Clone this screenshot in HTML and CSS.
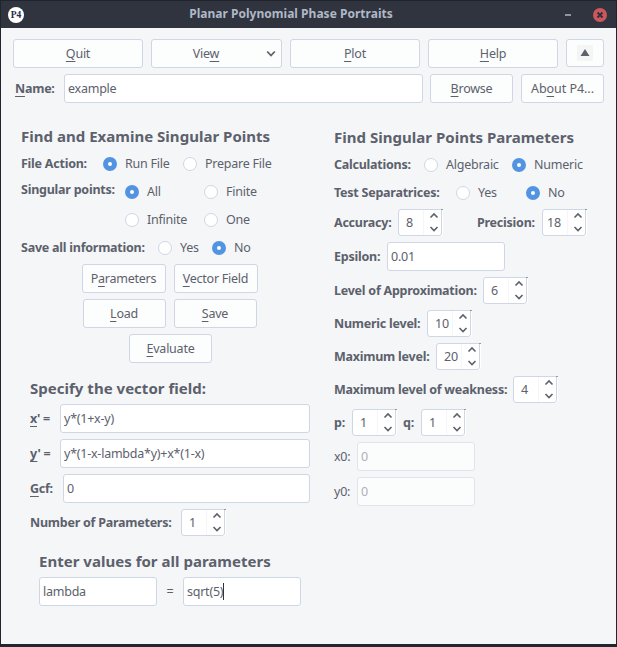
FILE: index.html
```html
<!DOCTYPE html>
<html lang="en">
<head>
<meta charset="utf-8">
<title>Planar Polynomial Phase Portraits</title>
<link rel="stylesheet" href="styles.css">
</head>
<body>
<svg class="defs" width="0" height="0" aria-hidden="true">
  <symbol id="arrows" viewBox="0 0 12 22"><path d="M2.500 6.500 6 3l3.500 3.500M2.500 16l3.500 3.500 3.500-3.500" fill="none" stroke="currentColor" stroke-width="1.600"/></symbol>
</svg>
<div class="window">
  <header class="titlebar">
    <span class="logo">P4</span>
    <h1>Planar Polynomial Phase Portraits</h1>
    <span class="minimize"></span>
    <svg class="close" viewBox="0 0 14 14"><circle cx="7" cy="7" r="7" fill="#cc575d"/><path d="M4.500 4.500l5 5m0-5l-5 5" stroke="#2f343f" stroke-width="2"/></svg>
  </header>

  <div class="toolbar">
    <button class="btn"><span><u>Q</u>uit</span></button>
    <button class="btn view"><span>Vie<u>w</u></span><svg width="10" height="8" viewBox="0 0 10 8"><path d="M1.200 1.500 5 5.500l3.800-4" fill="none" stroke="currentColor" stroke-width="1.800"/></svg></button>
    <button class="btn"><span><u>P</u>lot</span></button>
    <button class="btn"><span><u>H</u>elp</span></button>
    <button class="btn up"><i><svg width="16" height="16" viewBox="0 0 16 16"><path d="M8 4l4.500 7h-9z" fill="currentColor"/></svg></i></button>
  </div>
  <div class="namebar">
    <b class="name-label"><u>N</u>ame:</b>
    <div class="field">example</div>
    <button class="btn small browse"><span><u>B</u>rowse</span></button>
    <button class="btn small about"><span>Ab<u>o</u>ut P4...</span></button>
  </div>

  <main class="columns">
    <section class="left">
      <h2>Find and Examine Singular Points</h2>
      <div class="row options"><b class="l-file">File Action:</b><span class="radio on o-run">Run File</span><span class="radio">Prepare File</span></div>
      <div class="points">
        <b>Singular points:</b>
        <div class="points-grid"><span class="radio on">All</span><span class="radio">Finite</span><span class="radio">Infinite</span><span class="radio">One</span></div>
      </div>
      <div class="row options"><b class="l-save">Save all information:</b><span class="radio o-yes">Yes</span><span class="radio on">No</span></div>
      <div class="actions">
        <div><button class="btn wide"><span>P<u>a</u>rameters</span></button><button class="btn wide"><span><u>V</u>ector Field</span></button></div>
        <div><button class="btn small"><span><u>L</u>oad</span></button><button class="btn small"><span><u>S</u>ave</span></button></div>
        <div class="last"><button class="btn small"><span><u>E</u>valuate</span></button></div>
      </div>
      <div class="vector">
        <h2>Specify the vector field:</h2>
        <div class="row"><b class="l-eq"><u>x</u>' =</b><div class="field">y*(1+x-y)</div></div>
        <div class="row"><b class="l-eq"><u>y</u>' =</b><div class="field">y*(1-x-lambda*y)+x*(1-x)</div></div>
        <div class="row"><b class="l-gcf"><u>G</u>cf:</b><div class="field">0</div></div>
        <div class="row spinrow"><b class="l-num">Number of Parameters:</b><div class="spin"><span>1</span><svg><use href="#arrows"/></svg></div></div>
      </div>
      <div class="values">
        <h2>Enter values for all parameters</h2>
        <div class="row"><div class="field fixed">lambda</div><span class="equals">=</span><div class="field fixed">sqrt(5)<i class="caret"></i></div></div>
      </div>
    </section>

    <section class="right">
      <h2>Find Singular Points Parameters</h2>
      <div class="row options"><b class="l-calc">Calculations:</b><span class="radio o-alg">Algebraic</span><span class="radio on">Numeric</span></div>
      <div class="row options"><b class="l-test">Test Separatrices:</b><span class="radio o-sep">Yes</span><span class="radio on">No</span></div>
      <div class="row spinrow"><b class="l-acc">Accuracy:</b><div class="spin"><span>8</span><svg><use href="#arrows"/></svg></div><b class="l-prec">Precision:</b><div class="spin"><span class="flush">18</span><svg><use href="#arrows"/></svg></div></div>
      <div class="row"><b class="l-eps">Epsilon:</b><div class="field fixed">0.01</div></div>
      <div class="row spinrow"><b class="l-approx">Level of Approximation:</b><div class="spin"><span>6</span><svg><use href="#arrows"/></svg></div></div>
      <div class="row spinrow"><b class="l-numeric">Numeric level:</b><div class="spin"><span>10</span><svg><use href="#arrows"/></svg></div></div>
      <div class="row spinrow"><b class="l-max">Maximum level:</b><div class="spin"><span>20</span><svg><use href="#arrows"/></svg></div></div>
      <div class="row spinrow"><b class="l-weak">Maximum level of weakness:</b><div class="spin"><span>4</span><svg><use href="#arrows"/></svg></div></div>
      <div class="row spinrow"><b class="l-p">p:</b><div class="spin"><span>1</span><svg><use href="#arrows"/></svg></div><b class="l-q">q:</b><div class="spin"><span>1</span><svg><use href="#arrows"/></svg></div></div>
      <div class="row"><span class="l-zero">x0:</span><div class="field fixed disabled">0</div></div>
      <div class="row"><span class="l-zero">y0:</span><div class="field fixed disabled">0</div></div>
    </section>
  </main>
</div>
</body>
</html>
```
FILE: styles.css
```css
*, *::before, *::after { box-sizing: border-box; }
body { margin: 0; background: #f5f6f8; color: #5c616c; font: 12.5px/18px "Noto Sans", sans-serif; letter-spacing: -0.24px; }
.defs { position: absolute; }
.window { width: 617px; height: 647px; border: 1px solid #20242c; border-bottom: 3px solid #22262d; overflow: hidden; white-space: nowrap; }
h1, h2, b { font-weight: 700; margin: 0; }
h1, h2 { letter-spacing: 0.02px; }
u { text-decoration: underline; text-decoration-thickness: 1px; text-underline-offset: 3px; text-decoration-skip-ink: none; }

.titlebar { height: 27px; background: #2f343f; display: flex; align-items: center; padding: 0 9px 0 7px; }
.logo { width: 16px; height: 16px; border-radius: 50%; background: #fff; color: #25294b; font: 700 9.5px/16px "Liberation Serif", serif; text-align: center; letter-spacing: 0; }
.titlebar h1 { flex: 1; text-align: center; font-size: 12px; line-height: 18px; color: #afb8c6; padding: 0 7px 2px 0; }
.minimize { width: 6px; height: 2px; background: #90949e; margin-right: 22px; }
.close { width: 14px; height: 14px; }

.btn { font: inherit; letter-spacing: inherit; color: inherit; height: 29px; padding: 0; border: 1px solid #cfd6e6; border-radius: 3px; background: #fcfdfd; display: flex; align-items: center; justify-content: center; }
.field { height: 29px; flex: 1; border: 1px solid #cfd6e6; border-radius: 3px; background: #fff; padding: 0 3px; line-height: 27px; display: flex; align-items: center; }
.fixed { flex: 0 0 118px; }
.disabled { background: #fbfcfc; border-color: #e0e4ee; color: #adb0b6; }
.small { width: 83px; }
.wide { width: 84px; }

.toolbar { display: grid; grid-template-columns: 130px 131px 130px 130px 38px; gap: 8px; padding: 11px 12px 6px; }
.view { padding: 0 5px 0 0; }
.view span { flex: 1; padding-right: 6px; }
.up { height: 28px; }
.up i { width: 16px; height: 16px; background: #f5f5f6; display: block; }
.up svg { display: block; }
.namebar { display: flex; padding: 0 12px 0 14px; align-items: center; }
.name-label { width: 49px; }
.browse { margin: 0 8px 0 7px; }
.about { letter-spacing: -0.05px; }

.columns { display: flex; padding: 21px 0 0 20px; }
.left { width: 313px; }
h2 { font-size: 15px; line-height: 24px; }
.row { display: flex; align-items: center; height: 29px; margin-bottom: 6px; }
.row > b, .row > span { flex: none; }
.row.options { height: 28px; margin: 0; }
.row.spinrow { height: 27px; }

.radio { display: inline-flex; align-items: center; }
.radio::before { content: ""; width: 14px; height: 14px; margin-right: 8px; border-radius: 50%; border: 1px solid #cfd6e6; background: #fff; flex: none; }
.radio.on::before { border: 5px solid #5294e2; }

.left > h2 { margin-bottom: 1px; }
.left > .row.options { padding-top: 2px; }
.l-file { width: 82px; }
.o-run { width: 80px; }
.points { display: flex; height: 56px; padding-top: 1px; }
.points > b { width: 104px; padding-top: 3px; }
.points-grid { display: grid; grid-template-columns: 79px 80px; grid-template-rows: 28px 28px; }
.l-save { width: 137px; }
.o-yes { width: 54px; }
.actions { display: flex; flex-direction: column; gap: 6px; padding: 3px 16px 0 0; }
.actions > div { display: flex; gap: 8px; justify-content: center; }
.actions > .last { padding-left: 2px; }

.vector { padding: 13px 24px 0 9px; }
.vector h2 { margin-bottom: 4px; }
.l-eq { width: 30px; }
.l-gcf { width: 33px; }
.l-num { width: 151px; }
.values { padding: 7px 0 0 18px; }
.values h2 { margin-bottom: 4px; }
.equals { width: 26px; text-align: center; }
.caret { width: 1px; height: 17px; background: #30343c; }

.spin { position: relative; width: 44px; height: 27px; flex: none; border: 1px solid #cfd6e6; border-radius: 3px 0 3px 3px; background: linear-gradient(#f5f6f8, #f5f6f8) 24px 0 / 1px 100% no-repeat #fff; box-shadow: 1px 0 #fff; display: flex; align-items: center; }
.spin::after { content: ""; position: absolute; top: -1px; right: -2px; width: 2px; height: 1px; background: #9599a2; }
.spin span { width: 24px; padding-left: 7px; }
.spin .flush { padding-left: 4px; }
.spin svg { width: 12px; height: 22px; margin: 0 0 1px 4.5px; }

.right > h2 { padding-top: 1px; height: 27px; }
.l-calc { width: 90px; }
.o-alg { width: 88px; }
.l-test { width: 122px; }
.o-sep { width: 70px; }
.l-acc { width: 64px; }
.l-prec { width: 100px; padding-left: 35px; }
.l-eps { width: 53px; }
.l-approx { width: 149px; }
.l-numeric { width: 93px; }
.l-max { width: 102px; }
.l-weak { width: 179px; }
.l-p { width: 18px; }
.l-q { width: 25px; padding-left: 7px; }
.l-zero { width: 23px; }
.right > .options + .spinrow { margin-top: 2px; }
```
